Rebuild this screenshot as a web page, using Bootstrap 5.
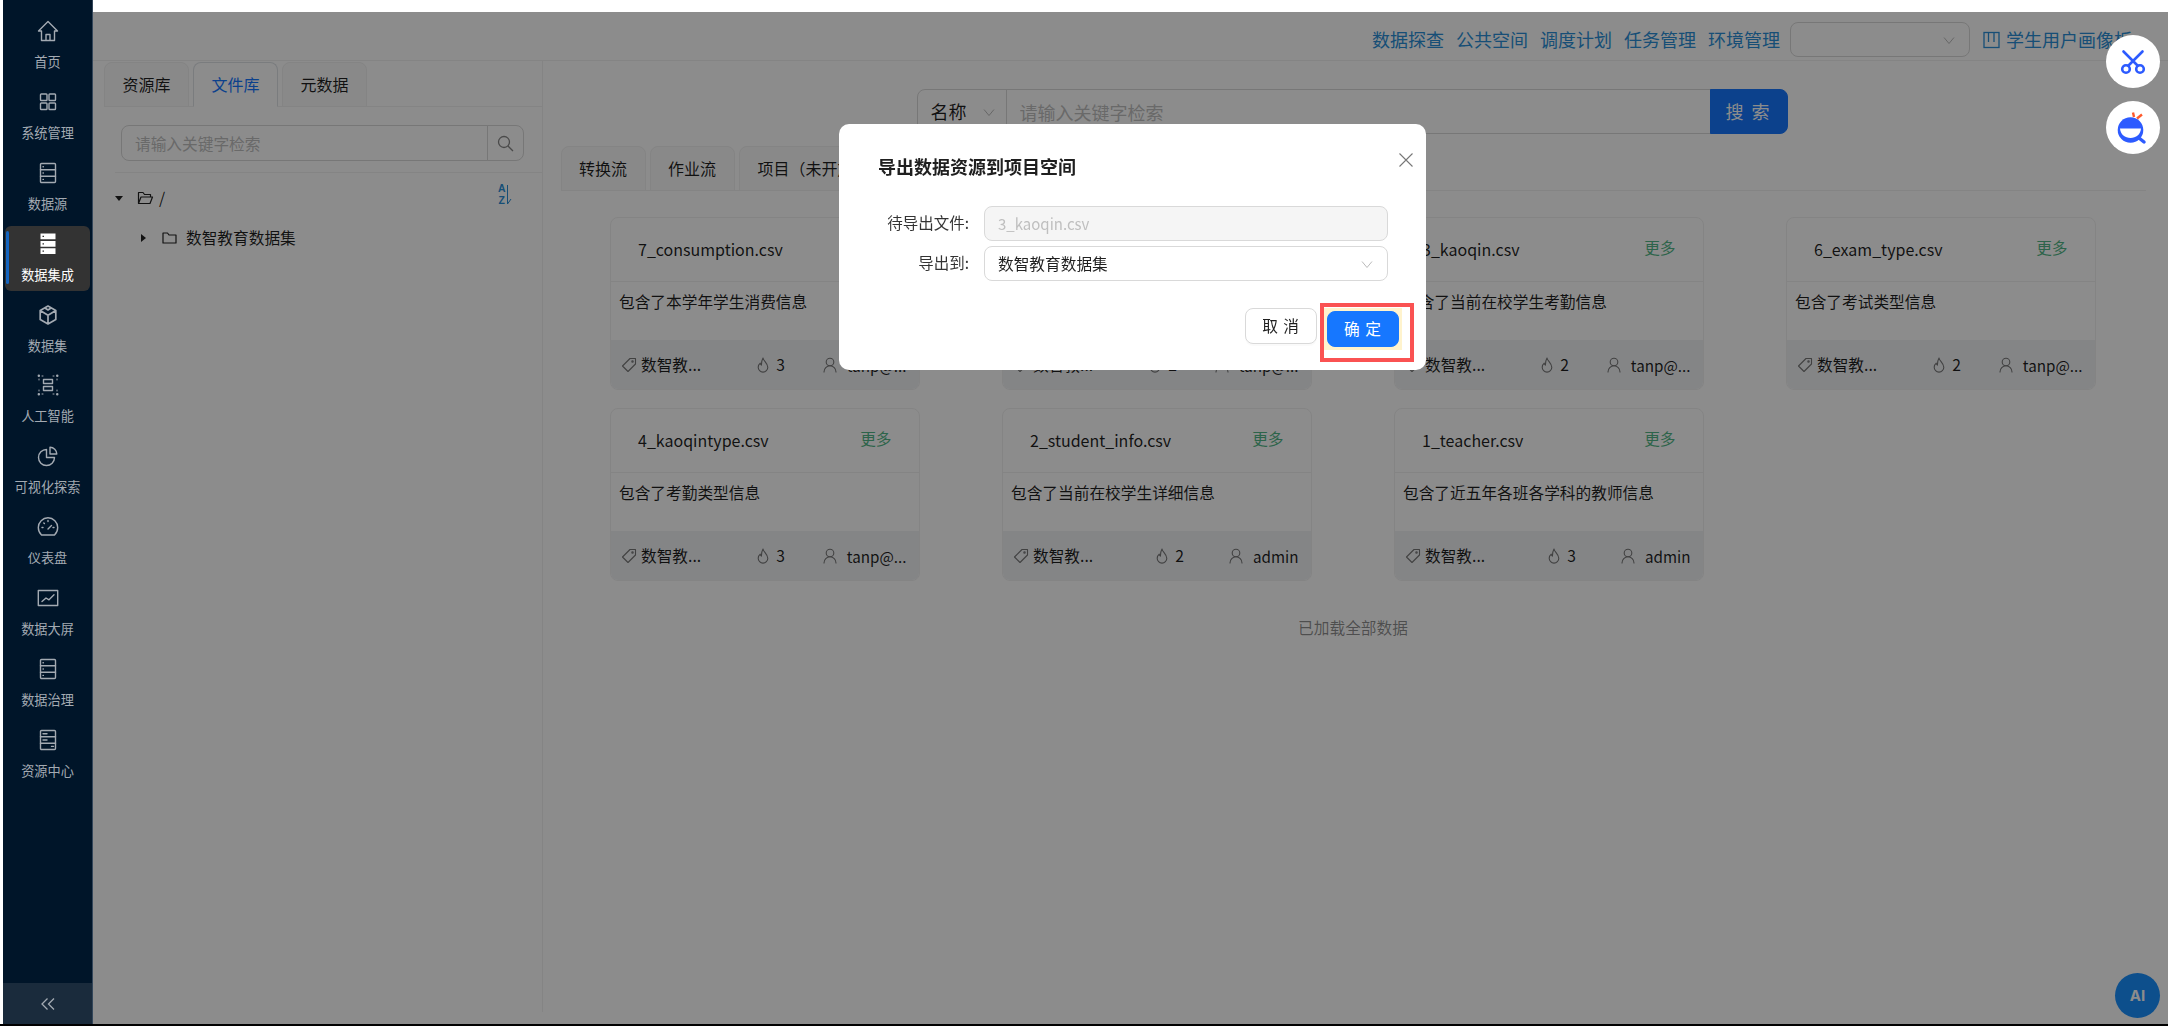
<!DOCTYPE html>
<html lang="zh-CN">
<head>
<meta charset="utf-8">
<title>数据集成</title>
<link rel="stylesheet" href="https://cdn.jsdelivr.net/npm/bootstrap@5.3.0/dist/css/bootstrap.min.css">
<style>
:root{--f:"Noto Sans CJK SC","Noto Sans",sans-serif}
html,body{height:1026px;overflow:hidden;background:#000;margin:0}
body{font-family:var(--f);font-size:15.7px;color:rgba(0,0,0,.88);position:relative}
.app{height:1024px;display:flex;background:#fff;padding-left:3px}
.side{width:90px;flex:none;background:#001529;display:flex;flex-direction:column;padding-top:10px;border-right:1px solid #33465a}
.side-item{height:70.9px;flex:none;padding:3px 2px}
.side-link{height:65px;position:relative;display:flex;flex-direction:column;align-items:center;padding-top:6px;color:#a3aab2;text-decoration:none;font-size:13.2px;border-radius:6px}
.side-link svg{width:24px;height:24px;fill:none;stroke:currentColor;stroke-width:1.4;stroke-linejoin:round;stroke-linecap:round}
.side-link span{margin-top:9px;line-height:20px;white-space:nowrap}
.side-link.active{background:#333;color:#fff}
.side-link.active::before{content:"";position:absolute;left:.5px;top:5px;width:3px;height:53px;background:#1565c0;border-radius:2px}
.side-foot{margin-top:auto;height:41px;background:#1a2b3c;display:flex;align-items:center;justify-content:center;color:#a3aab2}
.main{flex:1;min-width:0;display:flex;flex-direction:column}
.topbar{height:12px;flex:none;background:#fff}
.content{flex:1;position:relative;overflow:hidden;background:#fff}
.mask{position:absolute;inset:0;background:rgba(0,0,0,.45);z-index:10}
.head{height:49px;border-bottom:1px solid #f0f0f0;display:flex;align-items:center;justify-content:flex-end;gap:12px;padding:7px 36px 0 0;white-space:nowrap;font-size:18px}
.head a{color:#2a8fd8;text-decoration:none}
.head .form-select{width:180px;height:35px;margin:0 1px 0 -2px;flex:none;border-color:#d9d9d9;border-radius:8px}
.form-select{background-image:url("data:image/svg+xml,%3Csvg xmlns='http://www.w3.org/2000/svg' viewBox='0 0 12 12'%3E%3Cpath fill='none' stroke='%23bbb' stroke-width='1' d='M1 3.500l5 6 5-6'/%3E%3C/svg%3E");background-size:12px 12px;background-position:right 14px center}
.profile{display:inline-flex;align-items:center;gap:6px;color:#2a8fd8}
.panes{display:flex;align-items:flex-start}
.left{width:449.5px;height:951px;flex:none;border-right:1px solid #f0f0f0;padding-top:1px}
.tabs{border-bottom:1px solid #f0f0f0;gap:4px;--bs-nav-tabs-border-width:0}
.tabs .nav-link{height:45px;width:85px;padding:0 0 2px;display:flex;align-items:center;justify-content:center;color:rgba(0,0,0,.88);background:#fafafa;border:1px solid #f0f0f0;border-radius:8px 8px 0 0;margin-bottom:-1px;font-size:16px;white-space:nowrap}
.tabs .nav-link.active{color:#1677ff;background:#fff;border-bottom-color:#fff}
.left .tabs{margin-left:11px}
.lsearch{margin:18px 18px 0 28px;height:36px;flex-wrap:nowrap;width:auto}
.lsearch .form-control{height:36px;font-size:15.7px;border-color:#d9d9d9;border-radius:8px 0 0 8px;padding:0 13px}
.lsearch .btn{width:37px;flex:none;padding:0;border:1px solid #d9d9d9;border-radius:0 8px 8px 0;margin-left:-1px;color:#888;display:flex;align-items:center;justify-content:center}
.form-control::placeholder{color:#bfbfbf}
.ltree{margin:11px 0 0 22px;border-top:1px solid #f0f0f0;padding-top:11px;position:relative}
.tree-row{display:flex;align-items:center;height:28px}
.tree-row+.tree-row{margin-top:12px;padding-left:26px}
.caret-d{width:0;height:0;border:4px solid transparent;border-top:5px solid #222;border-bottom:0;margin-right:14px}
.caret-r{width:0;height:0;border:4px solid transparent;border-left:5px solid #222;border-right:0;margin-right:16px}
.sort{position:absolute;right:30px;top:10px;display:flex;align-items:center;color:#2a8fd8;font:700 10.4px "Liberation Sans",sans-serif}
.sort b{display:block;line-height:12px;font-weight:700;text-align:center}
.right{flex:1;min-width:0;padding:28px 22px 0 18px}
.bigsearch{width:871px;margin-left:356px;height:45px;flex-wrap:nowrap}
.bigsearch .form-select{flex:none;width:90px;height:45px;font-size:18px;padding:0 0 0 13px;border-color:#d9d9d9;border-radius:8px 0 0 8px;color:rgba(0,0,0,.88);background-position:right 11px center}
.bigsearch .form-control{height:45px;font-size:18px;padding:0 13px;border-color:#d9d9d9}
.bigsearch .btn{width:78px;height:45px;padding:0;font-size:18px;letter-spacing:2px;background:#1677ff;border-color:#1677ff;border-radius:0 8px 8px 0}
.rtabs{margin-top:12px}
.rtabs .nav-link{width:85px}
.rtabs .nav-link.wide{width:150px}
.cards{display:flex;flex-wrap:wrap;gap:18px 82.5px;margin:26px 0 0 49.5px}
.fc{width:309.5px;height:173px;border:1px solid #f0f0f0;border-radius:8px;--bs-card-inner-border-radius:7px;overflow:hidden}
.fc .card-header{height:64px;flex:none;background:#fff;border-bottom:1px solid #f0f0f0;padding:0 27px 2px;display:flex;align-items:center;justify-content:space-between;font-size:16px}
.fc .card-header a{color:#52b788;text-decoration:none;font-size:15.7px;margin-top:-2px}
.fc .card-body{padding:7px 8px;line-height:25px;font-size:15.7px;flex:1}
.fc .card-footer{height:49px;flex:none;background:#f0f2f5;border:0;padding:1px 12px 0 10px;display:flex;align-items:center;justify-content:space-between;white-space:nowrap}
.fc .card-footer>span{display:inline-flex;align-items:center;gap:6px}
.fc .card-footer svg{width:16px;height:16px;fill:none;stroke:#777;stroke-width:1.1;stroke-linejoin:round;stroke-linecap:round;flex:none}
.fc .card-footer .tag{padding-right:17px;gap:4px}
.fc .card-footer .hot{gap:5px}
.fc .card-footer .usr{gap:9px;font-size:15.2px}
.allloaded{margin:35px 0 0;text-align:center;width:1585px;color:rgba(0,0,0,.45);font-size:15.7px;line-height:24px}
.ai{position:absolute;right:8px;bottom:6px;width:45px;height:45px;border-radius:50%;background:#1890ff;color:#fff;font:700 15px/45px "Inter",sans-serif;text-align:center;z-index:5}
.float{position:absolute;right:8px;width:54px;height:53px;border-radius:50%;background:#fff;z-index:1060}
.float svg{display:block;width:54px;height:53px}
.f1{top:35px}.f2{top:101px}
.modal{overflow:hidden}
.modal-dialog{max-width:587px;width:587px;margin:124px 0 0 839px}
.modal-content{height:246px;border:0;border-radius:10px;color:rgba(0,0,0,.88)}
.modal-header{border:0;padding:30px 12px 0 39px;align-items:flex-start;justify-content:space-between}
.modal-title{font-size:18px;font-weight:600;line-height:24px}
.xbtn{background:none;border:0;padding:0;width:14px;height:14px;line-height:0;margin-top:-1px;margin-right:1px}
.modal-body{padding:28px 38px 0 39px;flex:none}
.frow{display:flex;align-items:center;height:35px}
.frow+.frow{margin-top:5px}
.frow label{width:91px;margin-right:15px;text-align:right;flex:none;white-space:nowrap;font-size:15.5px;color:rgba(0,0,0,.8);margin-top:-2px}
.frow .form-control,.frow .form-select{height:35px;padding:0 13px;border-color:#d9d9d9;border-radius:8px;font-size:15.7px;color:rgba(0,0,0,.88)}
.frow .form-control:disabled{background:#f5f5f5;color:#bfbfbf;font-size:15px}
.modal-footer{border:0;padding:0 24px 0 0;margin-top:auto;height:62px;align-items:flex-start;gap:7px;flex-wrap:nowrap}
.modal-footer>*{margin:0}
.modal-footer .btn{width:72px;height:36px;padding:0;margin:0;font-size:15.7px;border-radius:8px;white-space:pre;letter-spacing:1px}
.btn-cancel{background:#fff;border:1px solid #d9d9d9;color:rgba(0,0,0,.88);box-shadow:0 2px 0 rgba(0,0,0,.02)}
.btn-ok{background:#1677ff;border:1px solid #1677ff;color:#fff}
.mark{position:relative;display:flex}
.mark::after{content:"";position:absolute;left:-4px;top:-5px;width:94px;height:59px;border:4px solid #fa5252;pointer-events:none}
</style>
</head>
<body>
<div class="app">
  <nav class="side">
    <div class="side-item"><a class="side-link" href="#"><svg viewBox="0 0 24 24"><path d="M12 2.500 2.500 12H5.500V21.500H18.500V12H21.500ZM10 21.500V15.500H14V21.500"/></svg><span>首页</span></a></div>
    <div class="side-item"><a class="side-link" href="#"><svg viewBox="0 0 24 24"><rect x="4.500" y="4" width="6.500" height="6.500" rx=".8"/><rect x="13" y="4" width="6.500" height="6.500" rx=".8"/><rect x="4.500" y="13" width="6.500" height="6.500" rx=".8"/><rect x="13" y="13" width="6.500" height="6.500" rx=".8"/></svg><span>系统管理</span></a></div>
    <div class="side-item"><a class="side-link" href="#"><svg viewBox="0 0 24 24"><rect x="4.500" y="2.500" width="15" height="19" rx="1"/><path d="M4.500 8.800h15M4.500 15.200h15M7 5.700h.4M7 12h.4M7 18.400h.4"/></svg><span>数据源</span></a></div>
    <div class="side-item"><a class="side-link active" href="#"><svg viewBox="0 0 24 24" style="stroke:none"><path fill="#fff" d="M4.500 1.500h15v5.800h-15zM4.500 8.900h15v5.800h-15zM4.500 16.300h15v5.800h-15z"/><path fill="#333" d="M6.500 3.800h1.500v1.200H6.500zM6.500 11.200h1.500v1.200H6.500zM6.500 18.600h1.500v1.200H6.500z"/></svg><span>数据集成</span></a></div>
    <div class="side-item"><a class="side-link" href="#"><svg viewBox="0 0 24 24" style="stroke-width:1.7"><path d="M12 3l7.800 4.400v9.200L12 21l-7.800-4.400V7.400zM5 8l7 4.200L19 8M12 12.200V20.500M9 5l3 2 3-2"/></svg><span>数据集</span></a></div>
    <div class="side-item"><a class="side-link" href="#"><svg viewBox="0 0 24 24"><path d="M2.800 2.800h.1M21.200 2.800h.1M2.800 21.200h.1M21.200 21.200h.1" stroke-width="2.400"/><path d="M6 3h1M17 3h1M3 6v1M21 6v1M3 17v1M21 17v1M6 21h1M17 21h1" stroke-width="1"/><rect x="7.500" y="6.500" width="9" height="4"/><rect x="7.500" y="13.500" width="9" height="4"/></svg><span>人工智能</span></a></div>
    <div class="side-item"><a class="side-link" href="#"><svg viewBox="0 0 24 24"><path d="M10.500 5.500A8 8 0 1 0 18.500 13.500H10.500Z"/><path d="M14 3.200V10h6.800A7 7 0 0 0 14 3.200Z"/></svg><span>可视化探索</span></a></div>
    <div class="side-item"><a class="side-link" href="#"><svg viewBox="0 0 24 24"><path d="M5.500 20C3.500 18 2.300 15.500 2.300 12.500a9.700 9.700 0 0 1 19.400 0c0 3-1.200 5.500-3.200 7.500zM12 14l3.500-3.500M12 5.500v1M6 12.500h1M17 12.500h1M7.800 8l.6.6"/></svg><span>仪表盘</span></a></div>
    <div class="side-item"><a class="side-link" href="#"><svg viewBox="0 0 24 24"><rect x="2.300" y="4.500" width="19.400" height="15"/><path d="M6 15.500l4-3.500 3 1.800 5-5"/></svg><span>数据大屏</span></a></div>
    <div class="side-item"><a class="side-link" href="#"><svg viewBox="0 0 24 24"><rect x="4.500" y="2.500" width="15" height="19" rx="1"/><path d="M4.500 8.800h15M4.500 15.200h15M7 5.700h.4M7 12h.4M7 18.400h.4"/></svg><span>数据治理</span></a></div>
    <div class="side-item"><a class="side-link" href="#"><svg viewBox="0 0 24 24"><rect x="4.500" y="2.500" width="15" height="19" rx="1"/><path d="M4.500 8.800h15M4.500 15.200h15M7 5.700h4M7 12h4M15.500 18.400h2"/></svg><span>资源中心</span></a></div>
    <div class="side-foot"><svg width="14" height="14" viewBox="0 0 14 14" fill="none" stroke="currentColor" stroke-width="1.300"><path d="M6.500 1.500 1 7l5.500 5.500M13 1.500 7.500 7l5.500 5.500"/></svg></div>
  </nav>
  <div class="main">
    <div class="topbar"></div>
    <div class="content">
      <header class="head">
        <a href="#">数据探查</a><a href="#">公共空间</a><a href="#">调度计划</a><a href="#">任务管理</a><a href="#">环境管理</a>
        <select class="form-select" aria-label="环境"><option></option></select>
        <span class="profile"><svg width="17" height="18" viewBox="0 0 17 18" fill="none" stroke="currentColor" stroke-width="1.300"><rect x="1" y="1.500" width="15" height="15"/><path d="M5.500 2v9M11 2v9"/></svg>学生用户画像板</span>
      </header>
      <div class="panes">
        <aside class="left">
          <ul class="nav nav-tabs tabs">
            <li class="nav-item"><a class="nav-link" href="#">资源库</a></li>
            <li class="nav-item"><a class="nav-link active" href="#">文件库</a></li>
            <li class="nav-item"><a class="nav-link" href="#">元数据</a></li>
          </ul>
          <div class="input-group lsearch">
            <input class="form-control" placeholder="请输入关键字检索">
            <button class="btn" type="button" aria-label="搜索"><svg width="17" height="17" viewBox="0 0 17 17" fill="none" stroke="currentColor" stroke-width="1.300"><circle cx="7" cy="7" r="5.500"/><path d="M11 11l5 5"/></svg></button>
          </div>
          <div class="ltree">
            <div class="sort"><span><b>A</b><b>Z</b></span><svg width="6" height="20" viewBox="0 0 6 20" fill="none" stroke="currentColor"><path d="M1.500 0v19M1.500 19l3.500-5"/></svg></div>
            <div class="tree-row"><i class="caret-d"></i><svg width="17" height="14" viewBox="0 0 16 14" fill="none" stroke="#222" stroke-width="1.200" stroke-linejoin="round"><path d="M1 12.500V1.500h4.500l1.500 2h6v2.500M1 12.500h11.500l2.500-6.500H3.500z"/></svg><span style="margin-left:5px">/</span></div>
            <div class="tree-row"><i class="caret-r"></i><svg width="15" height="12" viewBox="0 0 15 12" fill="none" stroke="#222" stroke-width="1.200" stroke-linejoin="round"><path d="M1 1h4.500l1.500 2h7v8H1z"/></svg><span style="margin-left:9px">数智教育数据集</span></div>
          </div>
        </aside>
        <section class="right">
          <div class="input-group bigsearch">
            <select class="form-select" aria-label="字段"><option>名称</option></select>
            <input class="form-control" placeholder="请输入关键字检索">
            <button class="btn btn-primary" type="button">搜 索</button>
          </div>
          <ul class="nav nav-tabs tabs rtabs">
            <li class="nav-item"><a class="nav-link" href="#">转换流</a></li>
            <li class="nav-item"><a class="nav-link" href="#">作业流</a></li>
            <li class="nav-item"><a class="nav-link wide" href="#">项目（未开放）</a></li>
          </ul>
          <div class="cards">
            <div class="card fc"><div class="card-header"><span>7_consumption.csv</span><a href="#">更多</a></div><div class="card-body">包含了本学年学生消费信息</div><div class="card-footer"><span class="tag"><svg viewBox="0 0 16 16"><use href="#i-tag"/></svg>数智教...</span><span class="hot"><svg viewBox="0 0 16 16"><use href="#i-hot"/></svg>3</span><span class="usr"><svg viewBox="0 0 16 16"><use href="#i-user"/></svg>tanp@...</span></div></div>
            <div class="card fc"><div class="card-header"><span>5_exam.csv</span><a href="#">更多</a></div><div class="card-body">包含了学生考试信息</div><div class="card-footer"><span class="tag"><svg viewBox="0 0 16 16"><use href="#i-tag"/></svg>数智教...</span><span class="hot"><svg viewBox="0 0 16 16"><use href="#i-hot"/></svg>2</span><span class="usr"><svg viewBox="0 0 16 16"><use href="#i-user"/></svg>tanp@...</span></div></div>
            <div class="card fc"><div class="card-header"><span>3_kaoqin.csv</span><a href="#">更多</a></div><div class="card-body">包含了当前在校学生考勤信息</div><div class="card-footer"><span class="tag"><svg viewBox="0 0 16 16"><use href="#i-tag"/></svg>数智教...</span><span class="hot"><svg viewBox="0 0 16 16"><use href="#i-hot"/></svg>2</span><span class="usr"><svg viewBox="0 0 16 16"><use href="#i-user"/></svg>tanp@...</span></div></div>
            <div class="card fc"><div class="card-header"><span>6_exam_type.csv</span><a href="#">更多</a></div><div class="card-body">包含了考试类型信息</div><div class="card-footer"><span class="tag"><svg viewBox="0 0 16 16"><use href="#i-tag"/></svg>数智教...</span><span class="hot"><svg viewBox="0 0 16 16"><use href="#i-hot"/></svg>2</span><span class="usr"><svg viewBox="0 0 16 16"><use href="#i-user"/></svg>tanp@...</span></div></div>
            <div class="card fc"><div class="card-header"><span>4_kaoqintype.csv</span><a href="#">更多</a></div><div class="card-body">包含了考勤类型信息</div><div class="card-footer"><span class="tag"><svg viewBox="0 0 16 16"><use href="#i-tag"/></svg>数智教...</span><span class="hot"><svg viewBox="0 0 16 16"><use href="#i-hot"/></svg>3</span><span class="usr"><svg viewBox="0 0 16 16"><use href="#i-user"/></svg>tanp@...</span></div></div>
            <div class="card fc"><div class="card-header"><span>2_student_info.csv</span><a href="#">更多</a></div><div class="card-body">包含了当前在校学生详细信息</div><div class="card-footer"><span class="tag"><svg viewBox="0 0 16 16"><use href="#i-tag"/></svg>数智教...</span><span class="hot"><svg viewBox="0 0 16 16"><use href="#i-hot"/></svg>2</span><span class="usr"><svg viewBox="0 0 16 16"><use href="#i-user"/></svg>admin</span></div></div>
            <div class="card fc"><div class="card-header"><span>1_teacher.csv</span><a href="#">更多</a></div><div class="card-body">包含了近五年各班各学科的教师信息</div><div class="card-footer"><span class="tag"><svg viewBox="0 0 16 16"><use href="#i-tag"/></svg>数智教...</span><span class="hot"><svg viewBox="0 0 16 16"><use href="#i-hot"/></svg>3</span><span class="usr"><svg viewBox="0 0 16 16"><use href="#i-user"/></svg>admin</span></div></div>
          </div>
          <div class="allloaded">已加载全部数据</div>
        </section>
      </div>
      <div class="ai">AI</div>
      <div class="mask"></div>
    </div>
  </div>
</div>

<svg width="0" height="0" class="position-absolute" aria-hidden="true">
  <symbol id="i-tag" viewBox="0 0 16 16"><path d="M9 1.500h5.500V7L7 14.500 1.500 9z"/><circle cx="11.500" cy="4.500" r=".7"/></symbol>
  <symbol id="i-hot" viewBox="0 0 16 16"><path d="M8 1c.5 3 4.800 5 4.800 9.300a4.800 4.800 0 0 1-9.600 0c0-2 1-3.400 2-4.200.2 1 .6 1.500 1.200 2C6.400 5.800 6.800 3 8 1z"/></symbol>
  <symbol id="i-user" viewBox="0 0 16 16"><circle cx="8" cy="5" r="3.800"/><path d="M2 15c0-3.600 2.700-6.200 6-6.200s6 2.600 6 6.200"/></symbol>
</svg>

<div class="float f1"><svg viewBox="0 0 54 53" fill="none" stroke="#2d5bff" stroke-width="2.600" stroke-linecap="round"><circle cx="20" cy="34" r="3.800"/><circle cx="34" cy="34" r="3.800"/><path d="M17.500 16.500 31.500 30.500M36.500 16.500 22.500 30.500"/></svg></div>
<div class="float f2"><svg viewBox="0 0 54 53"><circle cx="24.500" cy="29" r="12.800" fill="#2d5bff"/><path fill="#fff" d="M14 27.500h21c-.5 6-5 9.500-10.500 9.500S14.500 33.500 14 27.500z"/><path d="M33 37l5 4" stroke="#2d5bff" stroke-width="3.500" stroke-linecap="round"/><path d="M27 11.500l1 4.500M36 13.500l-5 4" stroke="#ff5a2c" stroke-width="2.400"/></svg></div>

<div class="modal d-block" tabindex="-1">
  <div class="modal-dialog">
    <div class="modal-content">
      <div class="modal-header">
        <h5 class="modal-title">导出数据资源到项目空间</h5>
        <button class="xbtn" type="button" aria-label="关闭"><svg width="14" height="14" viewBox="0 0 14 14" fill="none" stroke="#777" stroke-width="1.100"><path d="M.5.500l13 13M13.500.500l-13 13"/></svg></button>
      </div>
      <div class="modal-body">
        <div class="frow"><label>待导出文件:</label><input class="form-control" value="3_kaoqin.csv" disabled></div>
        <div class="frow"><label>导出到:</label><select class="form-select"><option>数智教育数据集</option></select></div>
      </div>
      <div class="modal-footer">
        <button class="btn btn-cancel" type="button">取 消</button>
        <span class="mark"><button class="btn btn-ok" type="button">确 定</button></span>
      </div>
    </div>
  </div>
</div>
<script src="https://cdn.jsdelivr.net/npm/bootstrap@5.3.0/dist/js/bootstrap.bundle.min.js"></script>
</body>
</html>
